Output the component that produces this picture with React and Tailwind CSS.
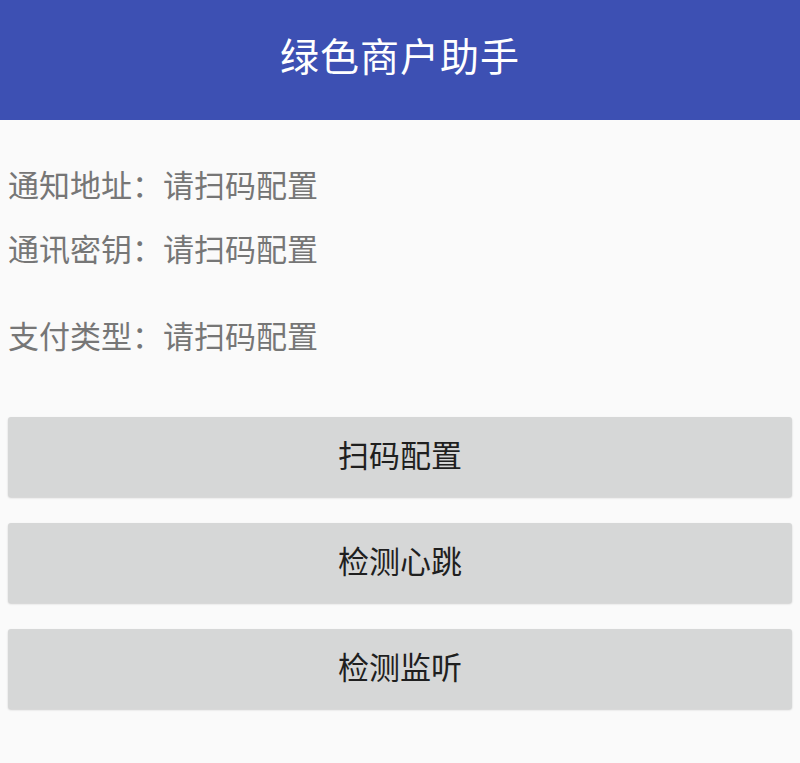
import React from 'react';

const font = { fontFamily: '"Roboto", "Noto Sans CJK SC", sans-serif' };

const rows = [
  { label: '通知地址', value: '请扫码配置' },
  { label: '通讯密钥', value: '请扫码配置' },
];

const buttons = ['扫码配置', '检测心跳', '检测监听'];

export default function App() {
  return (
    <div className="w-[800px] h-[763px] bg-[#fafafa] overflow-hidden" style={font}>
      <div className="h-[120px] bg-[#3d50b3] flex items-center justify-center">
        <h1 className="text-[39px] text-white tracking-[1px] -mt-[4px]">绿色商户助手</h1>
      </div>

      <div className="pt-[35px] pl-[8px] text-[31px] text-[#767676]">
        {rows.map((r) => (
          <div key={r.label} className="h-[64px] flex items-center">
            {r.label}：{r.value}
          </div>
        ))}
        <div className="h-[64px] flex items-center mt-[23px]">支付类型：请扫码配置</div>
      </div>

      <div className="mt-[47px] px-[8px] flex flex-col gap-[26px]">
        {buttons.map((b) => (
          <button
            key={b}
            className="h-[80px] w-full bg-[#d6d7d7] rounded-[3px] shadow-[0_1px_2px_rgba(0,0,0,0.18)] text-[31px] text-[#1f1f1f] flex items-center justify-center"
          >
            {b}
          </button>
        ))}
      </div>
    </div>
  );
}
